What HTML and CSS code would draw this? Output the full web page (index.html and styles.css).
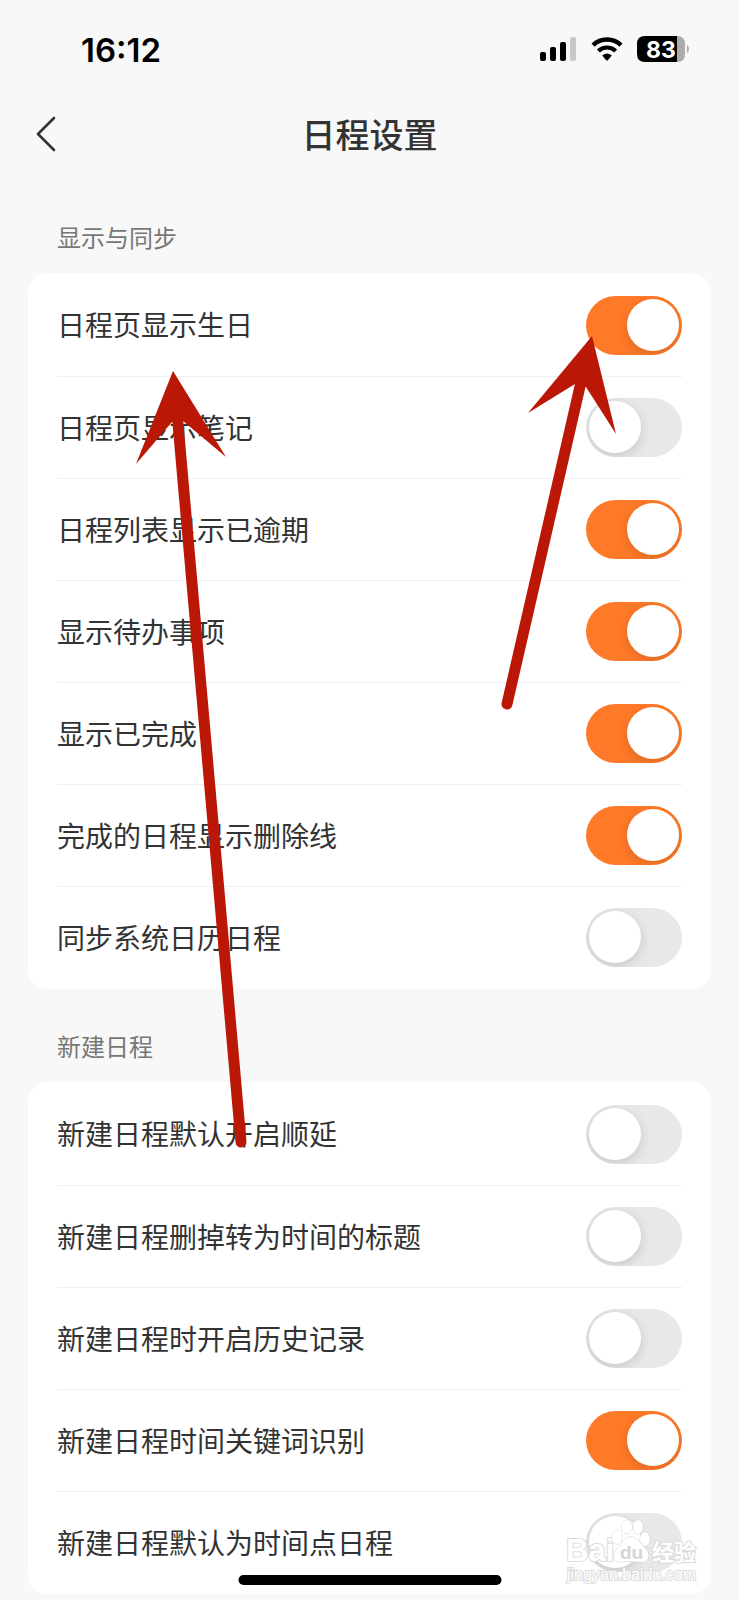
FILE: index.html
```
<!DOCTYPE html>
<html lang="zh-CN">
<head>
<meta charset="utf-8">
<meta name="viewport" content="width=device-width, initial-scale=1">
<title>日程设置</title>
<link rel="stylesheet" href="styles.css">
</head>
<body>
<div class="screen">
  <header class="status">
    <time class="clock">16:12</time>
    <div class="status-icons">
      <svg width="38" height="26" viewBox="0 0 38 26" aria-hidden="true">
        <rect x="1" y="16" width="6" height="9" rx="2"/>
        <rect x="11" y="11" width="6" height="14" rx="2"/>
        <rect x="21" y="6" width="6" height="19" rx="2"/>
        <rect x="31" y="1" width="6" height="24" rx="2" fill="#c8c8c8"/>
      </svg>
      <svg width="32" height="26" viewBox="0 0 32 26" aria-hidden="true">
        <path d="M2 9.2A20.2 20.2 0 0 1 30 9.2" fill="none" stroke="#000" stroke-width="4.4"/>
        <path d="M7.4 15A12.3 12.3 0 0 1 24.6 15" fill="none" stroke="#000" stroke-width="4.2"/>
        <path d="M11.2 19.4Q16 15.4 20.8 19.4L17 24Q16 25.2 15 24Z"/>
      </svg>
      <svg class="battery" width="52" height="34" viewBox="0 -4 52 34" role="img" aria-label="83%">
        <path d="M8 0H40V26H8Q0 26 0 18V8Q0 0 8 0Z"/>
        <path d="M40 0Q48 0 48 8V18Q48 26 40 26Z" fill="#acacac"/>
        <path d="M50 9Q52 10 52 13T50 17Z" fill="#acacac"/>
        <text class="battery-level" x="24" y="22" text-anchor="middle">83</text>
      </svg>
    </div>
  </header>

  <nav class="nav">
    <button class="back" type="button" aria-label="返回">
      <svg width="22" height="36" viewBox="0 0 22 36" aria-hidden="true">
        <path d="M19 2L3 18L19 34" fill="none" stroke="#333" stroke-width="2.6" stroke-linecap="round" stroke-linejoin="round"/>
      </svg>
    </button>
    <h1 class="title">日程设置</h1>
  </nav>

  <main>
    <section>
      <h2 class="group-title">显示与同步</h2>
      <div class="card">
        <label class="row"><span class="label">日程页显示生日</span><input class="switch" type="checkbox" role="switch" checked></label>
        <label class="row"><span class="label">日程页显示笔记</span><input class="switch" type="checkbox" role="switch"></label>
        <label class="row"><span class="label">日程列表显示已逾期</span><input class="switch" type="checkbox" role="switch" checked></label>
        <label class="row"><span class="label">显示待办事项</span><input class="switch" type="checkbox" role="switch" checked></label>
        <label class="row"><span class="label">显示已完成</span><input class="switch" type="checkbox" role="switch" checked></label>
        <label class="row"><span class="label">完成的日程显示删除线</span><input class="switch" type="checkbox" role="switch" checked></label>
        <label class="row"><span class="label">同步系统日历日程</span><input class="switch" type="checkbox" role="switch"></label>
      </div>
    </section>
    <section>
      <h2 class="group-title">新建日程</h2>
      <div class="card">
        <label class="row"><span class="label">新建日程默认开启顺延</span><input class="switch" type="checkbox" role="switch"></label>
        <label class="row"><span class="label">新建日程删掉转为时间的标题</span><input class="switch" type="checkbox" role="switch"></label>
        <label class="row"><span class="label">新建日程时开启历史记录</span><input class="switch" type="checkbox" role="switch"></label>
        <label class="row"><span class="label">新建日程时间关键词识别</span><input class="switch" type="checkbox" role="switch" checked></label>
        <label class="row"><span class="label">新建日程默认为时间点日程</span><input class="switch" type="checkbox" role="switch"></label>
      </div>
    </section>
  </main>

  <svg class="arrow arrow-label" width="110" height="780" viewBox="130 370 110 780" aria-hidden="true">
    <path d="M173 371L226 457L183 421L172 422L136 464Z"/>
    <path d="M177.500 418L241 1142" stroke-width="11" stroke-linecap="round"/>
  </svg>
  <svg class="arrow arrow-switch" width="120" height="380" viewBox="500 335 120 380" aria-hidden="true">
    <path d="M592 336L616 434L586 387L575 384L528 413Z"/>
    <path d="M581 382L507 704" stroke-width="11" stroke-linecap="round"/>
  </svg>

  <svg class="watermark" width="142" height="70" viewBox="562 1516 142 70" aria-hidden="true">
    <text class="wm-brand" x="566" y="1561">Bai</text>
    <g class="wm-paw">
      <ellipse cx="617" cy="1537" rx="5" ry="7"/>
      <ellipse cx="627" cy="1527" rx="5" ry="7"/>
      <ellipse cx="638" cy="1527" rx="5" ry="7"/>
      <ellipse cx="645" cy="1539" rx="5" ry="7"/>
      <path d="M631 1537C624 1537 622 1545 617 1549C611 1555 613 1563 622 1562C628 1561 634 1561 640 1562C649 1563 651 1555 646 1549C641 1545 638 1537 631 1537Z"/>
    </g>
    <text class="wm-du" x="620" y="1559">du</text>
    <text class="wm-cn" x="652" y="1560">经验</text>
    <text class="wm-url" x="567" y="1580">jingyan.baidu.com</text>
  </svg>

  <div class="home-indicator"></div>
</div>
</body>
</html>
```
FILE: styles.css
```
* {
  box-sizing: border-box;
}

body {
  margin: 0;
  background: #f8f8f8;
  color: #333;
  font-family: "Noto Sans CJK SC", sans-serif;
}

.screen {
  position: relative;
  min-height: 100vh;
  padding-bottom: 5px;
  overflow: hidden;
}

.status {
  display: flex;
  align-items: center;
  justify-content: space-between;
  height: 98px;
  padding: 0 50px 0 81px;
  color: #000;
}

.clock {
  padding-top: 2px;
  font: 600 33px/40px Inter, sans-serif;
}

.status-icons {
  display: flex;
  align-items: center;
  gap: 14px;
}

.battery-level {
  fill: #fff;
  font: 700 23px Inter, sans-serif;
}

.nav {
  display: grid;
  grid-template-columns: 60px 1fr 60px;
  align-items: center;
  height: 72px;
  margin-bottom: 10px;
}

.back {
  display: flex;
  justify-content: flex-end;
  padding: 0 3px;
  border: 0;
  background: none;
}

.title {
  margin: 0;
  font-size: 34px;
  font-weight: 500;
  line-height: 48px;
  text-align: center;
}

.group-title {
  margin: 0;
  padding: 39px 57px 18px;
  color: #777;
  font-size: 24px;
  font-weight: 400;
  line-height: 36px;
}

.card {
  margin: 0 28px;
  padding: 1px 29px;
  border-radius: 20px;
  background: #fff;
}

.row {
  display: flex;
  align-items: center;
  justify-content: space-between;
  height: 102px;
  font-size: 28px;
  line-height: 40px;
}

.row + .row {
  border-top: 1px solid #f0f0f0;
}

.label {
  padding-bottom: 2px;
}

.switch {
  appearance: none;
  flex: none;
  display: flex;
  width: 96px;
  height: 59px;
  margin: 0;
  padding: 3px;
  border-radius: 30px;
  background: #e8e8e8;
  overflow: hidden;
}

.switch::before {
  content: "";
  width: 52px;
  height: 52px;
  border-radius: 50%;
  background: #fff;
  box-shadow: 0 3px 12px rgba(0, 0, 0, 0.15);
}

.switch:checked {
  justify-content: flex-end;
  background: #ff7a28;
}

.arrow {
  position: absolute;
  overflow: visible;
  fill: #ba1706;
  stroke: #ba1706;
  stroke-width: 0;
  pointer-events: none;
}

.arrow-label {
  left: 130px;
  top: 370px;
}

.arrow-switch {
  left: 500px;
  top: 335px;
}

.watermark {
  position: absolute;
  right: 35px;
  bottom: 14px;
  fill: #fff;
  stroke: #dcdcdc;
  stroke-width: 2;
  paint-order: stroke;
  pointer-events: none;
}

.wm-paw {
  stroke: #cfcfcf;
  stroke-width: 1;
}

.wm-brand {
  font: 700 31px "Liberation Sans", sans-serif;
}

.wm-du {
  fill: #d4d4d4;
  stroke: none;
  font: 700 19px "Liberation Sans", sans-serif;
}

.wm-cn {
  font: 700 22px "Noto Sans CJK SC", sans-serif;
}

.wm-url {
  font: 400 16px "Liberation Sans", sans-serif;
}

.home-indicator {
  position: absolute;
  bottom: 15px;
  left: 50%;
  width: 263px;
  height: 10px;
  border-radius: 5px;
  background: #000;
  transform: translateX(-50%);
}
```
